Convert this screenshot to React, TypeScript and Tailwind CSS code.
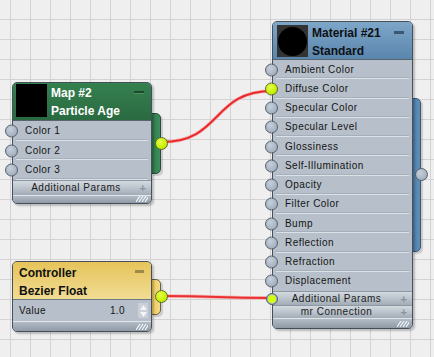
import React from "react";

const FONT = "font-['Liberation_Sans','Arial',sans-serif]";

function Socket({ className = "", yellow = false }: { className?: string; yellow?: boolean }) {
  return (
    <div
      className={
        "absolute w-[13px] h-[13px] rounded-full border " +
        (yellow
          ? "bg-[radial-gradient(circle_at_40%_35%,#e6ff4d,#c8f000_60%,#a8cc00)] border-[#5f6b35] "
          : "bg-[radial-gradient(circle_at_40%_35%,#c6d0dc,#a9b5c3_60%,#97a3b2)] border-[#56616e] ") +
        className
      }
    />
  );
}

function Row({ label, h, sep = true, socket = true, yellow = false }: { label: string; h: string; sep?: boolean; socket?: boolean; yellow?: boolean }) {
  return (
    <div className={"relative flex items-center pl-[12px] " + h}>
      {socket && <Socket className="left-[-8px] top-1/2 -translate-y-1/2" yellow={yellow} />}
      <span className="text-[10px] tracking-[0.45px] text-[#141414] leading-none">{label}</span>
      {sep && <div className="absolute left-[3px] right-[3px] bottom-0 h-px bg-[#dbe1e7]" />}
      {sep && <div className="absolute left-[3px] right-[3px] bottom-[1px] h-px bg-[#a6b0ba]" />}
    </div>
  );
}

function Bar({ label, h, socket = false }: { label: string; h: string; socket?: boolean }) {
  return (
    <div className={"relative flex items-center border-t border-t-[#8e98a3] bg-[linear-gradient(to_bottom,#d3d9df,#b9c2cb_55%,#a2acb6)] " + h}>
      {socket && (
        <div className="absolute left-[-7px] top-1/2 -translate-y-1/2 w-[12px] h-[12px] rounded-full bg-[#a9b5c3] border border-[#56616e] flex items-center justify-center">
          <div className="w-[8px] h-[8px] rounded-full bg-[#d2ff10]" />
        </div>
      )}
      <span className="flex-1 text-center pl-[2px] pr-[14px] text-[10px] tracking-[0.5px] text-[#1c1c1c] leading-none">{label}</span>
      <span className="absolute right-[5px] top-1/2 -translate-y-1/2 text-[11px] font-bold text-[#8a939c] leading-none">+</span>
    </div>
  );
}

function BottomBar({ h }: { h: string }) {
  return (
    <div className={"relative rounded-b-[4px] border-t border-t-[#e0e5ea] bg-[linear-gradient(to_bottom,#b3bcc6,#8f9aa6)] " + h}>
      <svg className="absolute right-[3px] bottom-[1px]" width="12" height="6" viewBox="0 0 12 6">
        {[0, 3, 6, 9].map((x) => (
          <line key={x} x1={x} y1={6} x2={x + 4} y2={0} stroke="#f4f6f8" strokeWidth="1.2" />
        ))}
      </svg>
    </div>
  );
}

const materialRows = [
  "Ambient Color",
  "Diffuse Color",
  "Specular Color",
  "Specular Level",
  "Glossiness",
  "Self-Illumination",
  "Opacity",
  "Filter Color",
  "Bump",
  "Reflection",
  "Refraction",
  "Displacement",
];

export default function App() {
  return (
    <div
      className={
        "relative w-[434px] h-[357px] overflow-hidden bg-[#efefef] bg-[linear-gradient(to_right,#d3d3d3_1px,transparent_1px),linear-gradient(to_bottom,#d3d3d3_1px,transparent_1px)] bg-[size:20px_20px] bg-[position:10px_19px] " +
        FONT
      }
    >
      {/* wires */}
      <svg className="absolute left-0 top-0" width="434" height="357" viewBox="0 0 434 357">
        <path d="M162,142 C222,142 212,91 272,91" fill="none" stroke="#f6b0b0" strokeWidth="3.5" />
        <path d="M162,142 C222,142 212,91 272,91" fill="none" stroke="#ea2a2a" strokeWidth="2" />
        <path d="M162,296 C217,296 217,298 272,298" fill="none" stroke="#f6b0b0" strokeWidth="3.5" />
        <path d="M162,296 C217,296 217,298 272,298" fill="none" stroke="#ea3030" strokeWidth="2" />
      </svg>

      {/* Map #2 */}
      <div className="absolute left-[12px] top-[82px] w-[140px]">
        <div className="absolute left-[139px] top-[31px] w-[10px] h-[61px] rounded-r-[5px] border border-[#2d4a38] bg-[linear-gradient(to_right,#2f7a4b,#3d8f5c)] shadow-[2px_2px_1px_rgba(0,0,0,0.15)]">
          <Socket yellow className="right-[-8px] top-[23px]" />
        </div>
        <div className="relative rounded-[5px] border border-[#46505b] bg-[#b7c0ca] shadow-[2px_2px_2px_rgba(0,0,0,0.22)]">
          <div className="relative h-[38px] rounded-t-[4px] bg-[linear-gradient(to_bottom,#35804f,#2a6a41)] border-b border-b-[#58656f] flex">
            <div className="ml-[3px] mt-[1px] w-[31px] h-[33px] bg-black" />
            <div className="ml-[4px] pt-[1px] text-white font-bold text-[12px] leading-[18px]">
              <div>Map #2</div>
              <div>Particle Age</div>
            </div>
            <div className="absolute left-[121px] top-[8px] w-[10px] h-[2px] bg-[#1c4a2d] shadow-[0_1px_0_#4f8f64]" />
          </div>
          {["Color 1", "Color 2", "Color 3"].map((l) => (
            <Row key={l} label={l} h="h-[19.7px]" />
          ))}
          <Bar label="Additional Params" h="h-[15px]" />
          <BottomBar h="h-[8px]" />
        </div>
      </div>

      {/* Controller */}
      <div className="absolute left-[12px] top-[261px] w-[140px]">
        <div className="absolute left-[139px] top-[18px] w-[10px] h-[36px] rounded-r-[5px] border border-[#6d6040] bg-[linear-gradient(to_right,#ecc95c,#f5da86)] shadow-[2px_2px_1px_rgba(0,0,0,0.15)]">
          <Socket yellow className="right-[-8px] top-[10px]" />
        </div>
        <div className="relative rounded-[5px] border border-[#46505b] bg-[#b7c0ca] shadow-[2px_2px_2px_rgba(0,0,0,0.22)]">
          <div className="relative h-[38px] rounded-t-[4px] bg-[linear-gradient(to_bottom,#e6c45a,#f2dc94)] border-b border-b-[#6e7882] pl-[6px] pt-[2px] text-[#111] font-bold text-[12px] leading-[18px]">
            <div>Controller</div>
            <div>Bezier Float</div>
            <div className="absolute left-[122px] top-[8px] w-[9px] h-[3px] bg-[#9c8a48]" />
          </div>
          <div className="relative h-[21px] flex items-center pl-[6px]">
            <span className="text-[10px] tracking-[0.45px] text-[#141414] leading-none">Value</span>
            <span className="absolute right-[26px] text-[10px] tracking-[0.4px] text-[#141414] leading-none">1.0</span>
            <div className="absolute right-[3px] top-[3px] w-[10px] h-[15px] bg-[#c9d0d7] flex flex-col items-center justify-center gap-[2px]">
              <svg width="7" height="5" viewBox="0 0 7 5"><path d="M3.5,0 L7,5 L0,5 Z" fill="#f4f6f8" /></svg>
              <svg width="7" height="5" viewBox="0 0 7 5"><path d="M0,0 L7,0 L3.5,5 Z" fill="#f4f6f8" /></svg>
            </div>
          </div>
          <BottomBar h="h-[10px]" />
        </div>
      </div>

      {/* Material #21 */}
      <div className="absolute left-[272px] top-[21px] w-[141px]">
        <div className="absolute left-[140px] top-[77px] w-[9px] h-[154px] rounded-r-[5px] border border-[#3a5670] bg-[linear-gradient(to_right,#4f80ab,#5f8fb9)] shadow-[2px_2px_1px_rgba(0,0,0,0.15)]">
          <Socket className="right-[-8px] top-[69px]" />
        </div>
        <div className="relative rounded-[5px] border border-[#46505b] bg-[#b7c0ca] shadow-[2px_2px_2px_rgba(0,0,0,0.22)]">
          <div className="relative h-[38px] rounded-t-[4px] bg-[linear-gradient(to_bottom,#7ea6c8,#5a85ad)] border-b border-b-[#58656f] flex">
            <div className="ml-[4px] mt-[3px] w-[31px] h-[32px] bg-[#333] flex items-center justify-center">
              <div className="w-[29px] h-[29px] rounded-full bg-black" />
            </div>
            <div className="ml-[4px] pt-[2px] text-[#0d1014] font-bold text-[12px] leading-[18px]">
              <div>Material #21</div>
              <div>Standard</div>
            </div>
            <div className="absolute left-[121px] top-[9px] w-[10px] h-[3px] bg-[#3a5874]" />
          </div>
          {materialRows.map((l, i) => (
            <Row key={l} label={l} h="h-[19.25px]" yellow={i === 1} sep={i !== materialRows.length - 1} />
          ))}
          <Bar label="Additional Params" h="h-[14px]" socket />
          <Bar label="mr Connection" h="h-[13px]" />
          <BottomBar h="h-[10px]" />
        </div>
      </div>
    </div>
  );
}
